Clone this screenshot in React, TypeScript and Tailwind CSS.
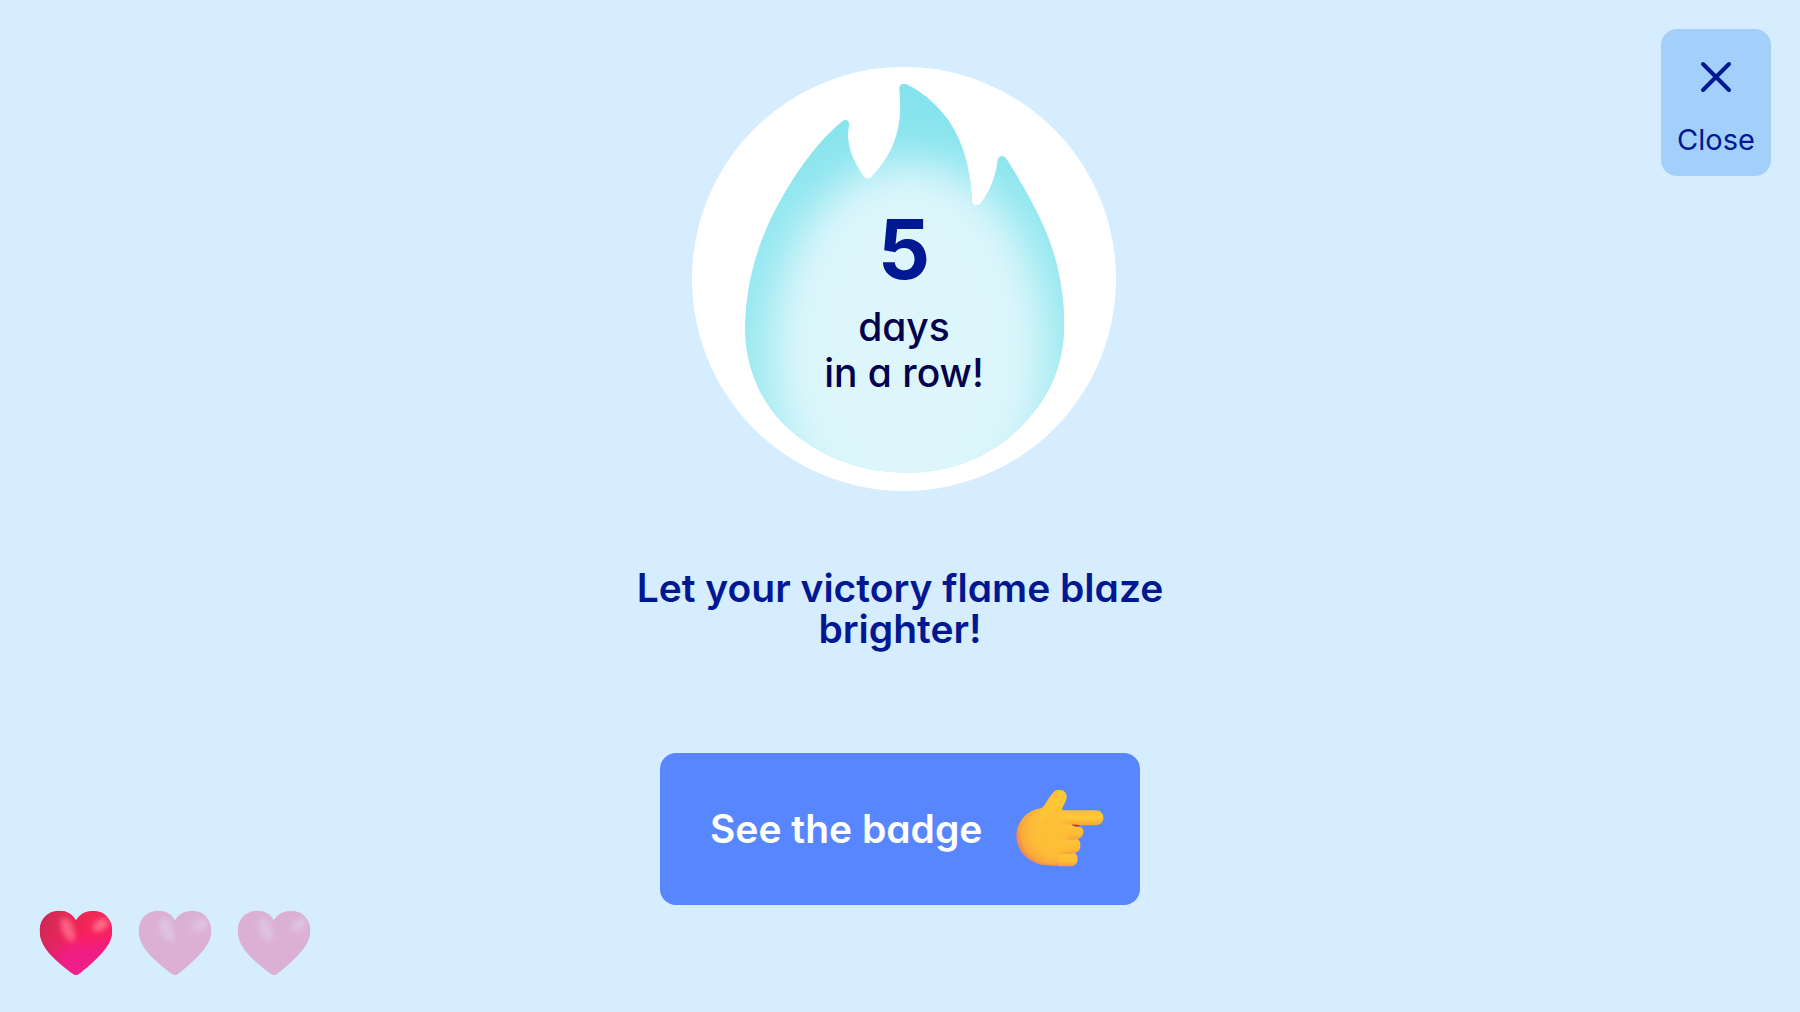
import { useState } from "react";

const MAX_LIVES = 3;

function Flame() {
  return (
    <svg
      viewBox="36 36 1272 1272"
      className="col-start-1 row-start-1 size-full"
      aria-hidden="true"
    >
      <defs>
        <linearGradient id="flame-edge" x1="0" y1="0" x2="0" y2="1">
          <stop offset="0" stopColor="#84e3ed" />
          <stop offset="0.35" stopColor="#92e7f0" />
          <stop offset="0.7" stopColor="#99e9f0" />
          <stop offset="1" stopColor="#a6ecf2" />
        </linearGradient>
        <filter id="flame-blur" x="-40%" y="-40%" width="180%" height="180%">
          <feGaussianBlur stdDeviation="62" />
        </filter>
        <clipPath id="flame-shape">
          <path d="M658 100 C658 88 668 84 680 88 C735 114 775 156 801 190 C850 256 874 350 876 440 C878 454 894 455 902 445 C930 408 946 368 953 316 C956 300 972 299 980 312 C1025 384 1058 442 1085 500 C1130 597 1153 700 1153 815 C1151 920 1117 1010 1050 1085 C965 1190 830 1253 685 1253 C520 1253 385 1190 290 1085 C227 1008 195 920 195 815 C197 700 225 590 273 490 C325 385 400 270 485 200 C496 191 508 195 507 208 L504 240 C505 285 524 324 548 360 C557 374 568 374 577 363 C636 300 664 230 660 140 Z" />
        </clipPath>
      </defs>
      <circle cx="672" cy="672" r="636" fill="#fff" />
      <g clipPath="url(#flame-shape)">
        <rect x="190" y="80" width="970" height="1180" fill="url(#flame-edge)" />
        <ellipse
          cx="688"
          cy="880"
          rx="412"
          ry="560"
          fill="#dcf6fb"
          filter="url(#flame-blur)"
        />
      </g>
    </svg>
  );
}

function PointingHand() {
  return (
    <svg viewBox="47 43 264 234" className="h-[78px] w-[88px]" aria-hidden="true">
      <defs>
        <radialGradient id="palm" cx="0.64" cy="0.38" r="0.64">
          <stop offset="0" stopColor="#ffc636" />
          <stop offset="0.6" stopColor="#fdbc38" />
          <stop offset="0.88" stopColor="#faa93c" />
          <stop offset="1" stopColor="#ef8a50" />
        </radialGradient>
        <linearGradient id="index" x1="0" y1="0" x2="0" y2="1">
          <stop offset="0" stopColor="#ffbe33" />
          <stop offset="0.5" stopColor="#ffc938" />
          <stop offset="1" stopColor="#f7a234" />
        </linearGradient>
        <linearGradient id="finger" x1="0" y1="0" x2="0" y2="1">
          <stop offset="0" stopColor="#ffc636" />
          <stop offset="0.65" stopColor="#fdbb35" />
          <stop offset="1" stopColor="#f3a03a" />
        </linearGradient>
        <linearGradient id="thumb" x1="0" y1="0" x2="1" y2="1">
          <stop offset="0" stopColor="#fbb033" />
          <stop offset="0.5" stopColor="#ffc936" />
          <stop offset="1" stopColor="#fdbb35" />
        </linearGradient>
        <filter id="soften" x="-40%" y="-40%" width="180%" height="180%">
          <feGaussianBlur stdDeviation="9" />
        </filter>
      </defs>
      <path
        d="M122 98 C80 103 48 140 48 180 C49 228 84 258 126 268 C160 272 195 268 218 272 L215 150 L190 105 Z"
        fill="url(#palm)"
      />
      <path
        d="M120 102 C138 86 146 62 162 47 C176 36 199 43 199 64 C198 80 188 88 184 104 L186 130 L120 132 Z"
        fill="url(#thumb)"
      />
      <path
        d="M176 104 H287 C301 104 309 114 309 126 C309 140 300 148 286 148 L214 150 L176 150 Z"
        fill="url(#index)"
      />
      <path
        d="M176 230 H214 C227 231 232 240 232 251 C231 264 224 272 210 272 H176 Z"
        fill="url(#finger)"
      />
      <path
        d="M172 188 H224 C237 190 241 200 240 211 C239 226 229 232 216 235 H172 Z"
        fill="url(#finger)"
      />
      <path
        d="M172 146 H210 C222 153 232 154 243 155 C250 160 251 170 247 178 C243 188 233 191 220 192 H172 Z"
        fill="url(#finger)"
      />
      <ellipse
        cx="162"
        cy="178"
        rx="42"
        ry="72"
        fill="#fdbe37"
        filter="url(#soften)"
      />
      <path d="M214 147 C222 146 232 147 240 150 C232 155 221 153 214 147 Z" fill="#cf3a2b" />
    </svg>
  );
}

function Heart({ filled }: { filled: boolean }) {
  return (
    <svg
      viewBox="27 31 222 198"
      className={filled ? "h-[66px] w-[74px]" : "h-[66px] w-[74px] opacity-30"}
      aria-hidden="true"
    >
      <defs>
        <linearGradient id="heart-body" x1="0.35" y1="0" x2="0.45" y2="1">
          <stop offset="0" stopColor="#f02a55" />
          <stop offset="0.4" stopColor="#f82060" />
          <stop offset="0.7" stopColor="#ef1c86" />
          <stop offset="1" stopColor="#f0208c" />
        </linearGradient>
        <linearGradient id="heart-shade" x1="0" y1="0.3" x2="0.45" y2="0.42">
          <stop offset="0" stopColor="#c82a56" stopOpacity="0.85" />
          <stop offset="0.5" stopColor="#d22a56" stopOpacity="0.6" />
          <stop offset="1" stopColor="#d42a58" stopOpacity="0" />
        </linearGradient>
        <filter id="heart-blur" x="-60%" y="-60%" width="220%" height="220%">
          <feGaussianBlur stdDeviation="8" />
        </filter>
        <clipPath id="heart-shape">
          <path d="M138 62 C128 43 111 33 88 33 C52 33 29 60 29 94 C29 132 56 163 90 192 C107 207 122 218 134 226 Q138 228 142 226 C155 218 168 206 183 193 C218 160 247 132 247 94 C247 58 224 33 190 33 C166 33 148 44 138 62 Z" />
        </clipPath>
      </defs>
      <g clipPath="url(#heart-shape)">
        {filled ? (
          <>
            <rect x="27" y="31" width="222" height="198" fill="url(#heart-body)" />
            <rect x="27" y="31" width="222" height="198" fill="url(#heart-shade)" />
          </>
        ) : (
          <rect x="27" y="31" width="222" height="198" fill="#ea2876" />
        )}
        <ellipse
          cx="114"
          cy="90"
          rx="18"
          ry="38"
          transform="rotate(-22 114 90)"
          fill={filled ? "#fb5f80" : "#f4649a"}
          filter="url(#heart-blur)"
        />
        <ellipse
          cx="212"
          cy="76"
          rx="27"
          ry="16"
          transform="rotate(-35 212 76)"
          fill={filled ? "#ff6a88" : "#f4649a"}
          filter="url(#heart-blur)"
        />
        <path
          d="M140 60 C150 46 160 38 175 36 C160 58 150 80 142 110 Z"
          fill="#d3294c"
          opacity="0.6"
          filter="url(#heart-blur)"
        />
      </g>
    </svg>
  );
}

export default function App() {
  const [open, setOpen] = useState(true);
  const days = 5;
  const lives = 1;

  return (
    <div className="grid min-h-screen grid-cols-[1fr_auto_1fr] bg-[#d6edff] font-['Inter',sans-serif] text-[#001892] [font-feature-settings:'cv11']">
      {open && (
        <>
          <div
            className="flex gap-[25px] self-end pb-9 pl-[39px]"
            role="img"
            aria-label={`${lives} of ${MAX_LIVES} lives left`}
          >
            {Array.from({ length: MAX_LIVES }, (_, i) => (
              <Heart key={i} filled={i < lives} />
            ))}
          </div>

          <main className="flex w-[560px] flex-col items-center pt-[67px]">
            <div className="pl-2">
              <div className="grid size-[424px]">
                <Flame />
                <div className="z-10 col-start-1 row-start-1 flex flex-col items-center pt-[141px]">
                  <p className="text-[82px] leading-[84px] font-bold">{days}</p>
                  <p className="mt-3 text-center text-[39px] leading-[46px] font-medium text-[#03004d]">
                    days
                    <br />
                    in a row!
                  </p>
                </div>
              </div>
            </div>

            <h1 className="mt-[76px] text-center text-[39px] leading-[41px] font-semibold">
              Let your victory flame blaze brighter!
            </h1>

            <button
              type="button"
              className="mt-[104px] flex h-[152px] w-[480px] cursor-pointer items-center justify-between rounded-2xl bg-[#5886ff] pr-9 pl-[50px] text-[39px] font-semibold text-white"
            >
              See the badge
              <PointingHand />
            </button>
          </main>

          <button
            type="button"
            onClick={() => {
              setOpen(false);
            }}
            className="mt-[29px] mr-[29px] flex h-[147px] w-[110px] cursor-pointer flex-col items-center justify-between self-start justify-self-end rounded-2xl bg-[#a2d0fb] pt-8 pb-[18px] text-[29px] leading-9"
          >
            <svg
              viewBox="0 0 32 32"
              className="size-8"
              fill="none"
              stroke="currentColor"
              strokeWidth="4"
              strokeLinecap="round"
              aria-hidden="true"
            >
              <path d="M3 3 L29 29 M29 3 L3 29" />
            </svg>
            Close
          </button>
        </>
      )}
    </div>
  );
}
